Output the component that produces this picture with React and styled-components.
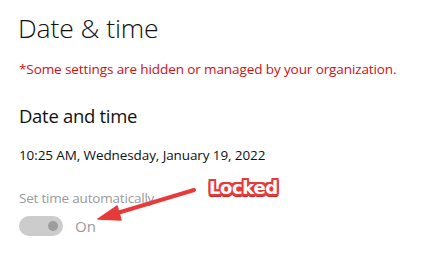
import React from 'react';
import styled, { createGlobalStyle } from 'styled-components';

const GlobalStyle = createGlobalStyle`
	html, body {
		margin: 0;
		padding: 0;
		background: #fff;
	}
	body {
		font-family: 'Open Sans', 'Noto Sans', sans-serif;
	}
`;

const Page = styled.div`
	position: relative;
	width: 446px;
	height: 257px;
	overflow: hidden;
	padding: 11px 0 0 18px;
	box-sizing: border-box;
	display: flex;
	flex-direction: column;
`;

const Title = styled.h1`
	margin: 0;
	font-size: 26.5px;
	font-weight: 300;
	color: #111;
	line-height: 34px;
	letter-spacing: -0.1px;
`;

const Notice = styled.p`
	margin: 15px 0 0 1px;
	font-size: 13.5px;
	line-height: 18px;
	color: #d01010;
	letter-spacing: -0.1px;
`;

const Section = styled.h2`
	margin: 25px 0 0 1px;
	font-size: 18.5px;
	font-weight: 400;
	line-height: 25px;
	color: #111;
	letter-spacing: -0.3px;
`;

const Clock = styled.div`
	margin: 18px 0 0 1px;
	font-size: 13.5px;
	line-height: 18px;
	color: #111;
	letter-spacing: -0.1px;
`;

const Label = styled.div`
	margin: 25px 0 0 1px;
	font-size: 13.5px;
	line-height: 18px;
	color: #9a9a9a;
	letter-spacing: -0.2px;
`;

const ToggleRow = styled.div`
	display: flex;
	align-items: center;
	gap: 12px;
	margin: 9px 0 0 1px;
`;

const Toggle = styled.div`
	width: 44px;
	height: 20px;
	border-radius: 10px;
	background: #cccccc;
	display: flex;
	align-items: center;
	justify-content: flex-end;
	padding-right: 5px;
	box-sizing: border-box;
`;

const Knob = styled.span`
	width: 10px;
	height: 10px;
	border-radius: 50%;
	background: #9d9d9d;
`;

const ToggleText = styled.span`
	font-size: 15px;
	color: #9a9a9a;
`;

const Arrow = styled.svg`
	position: absolute;
	left: 0;
	top: 0;
	pointer-events: none;
`;

const Badge = styled.div`
	position: absolute;
	left: 209px;
	top: 177px;
	font-family: 'DejaVu Sans', sans-serif;
	font-weight: 700;
	font-size: 18px;
	line-height: 22px;
	color: #fff;
	letter-spacing: -0.4px;
	text-shadow:
		2px 0 0 #e8393b, -2px 0 0 #e8393b, 0 2px 0 #e8393b, 0 -2px 0 #e8393b,
		2px 2px 0 #e8393b, -2px -2px 0 #e8393b, 2px -2px 0 #e8393b, -2px 2px 0 #e8393b,
		1px 3px 0 #c42a2c, -1px 3px 0 #c42a2c;
`;

const App = () => {
	return (
		<Page>
			<GlobalStyle />
			<Title>Date &amp; time</Title>
			<Notice>*Some settings are hidden or managed by your organization.</Notice>
			<Section>Date and time</Section>
			<Clock>10:25 AM, Wednesday, January 19, 2022</Clock>
			<Label>Set time automatically</Label>
			<ToggleRow>
				<Toggle>
					<Knob />
				</Toggle>
				<ToggleText>On</ToggleText>
			</ToggleRow>
			<Arrow width='446' height='257' viewBox='0 0 446 257'>
				<line x1='194' y1='190' x2='114' y2='214' stroke='#e8393b' strokeWidth='4' strokeLinecap='round' />
				<polygon points='98,219 117,206 121,220' fill='#e8393b' stroke='#e8393b' strokeWidth='1.5' strokeLinejoin='round' />
			</Arrow>
			<Badge>Locked</Badge>
		</Page>
	);
};

export default App;
